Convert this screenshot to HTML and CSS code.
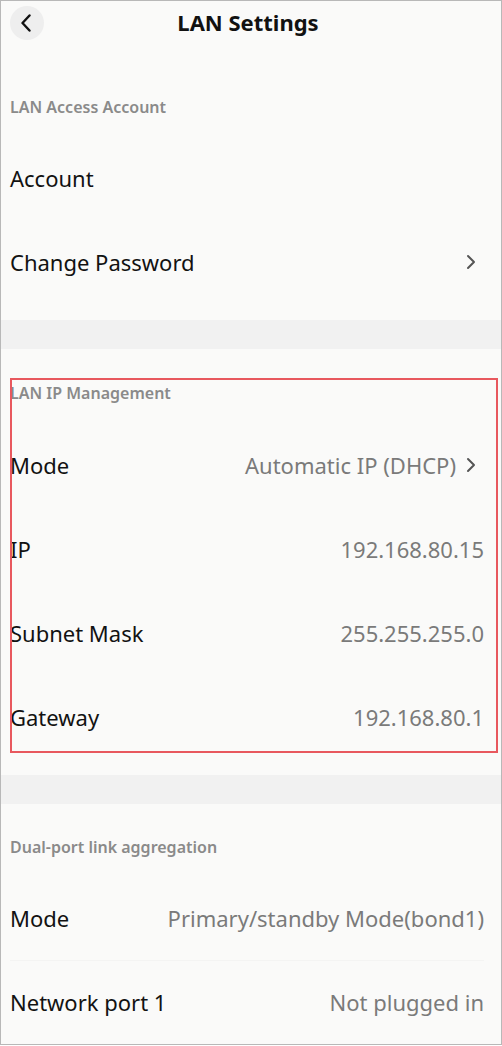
FILE: index.html
```html
<!DOCTYPE html>
<html>
<head>
<meta charset="utf-8">
<link rel="stylesheet" href="styles.css">
</head>
<body>
<div class="frame">
  <header class="topbar">
    <div class="back">
      <svg width="12" height="18" viewBox="0 0 12 18"><path d="M9.5 1.5 L2.5 9 L9.5 16.5" fill="none" stroke="#111" stroke-width="2.4" stroke-linecap="round" stroke-linejoin="round"/></svg>
    </div>
    <h1 class="title">LAN Settings</h1>
  </header>

  <section class="section first">
    <div class="sec-head">LAN Access Account</div>
    <div class="row"><span class="label">Account</span></div>
    <div class="row"><span class="label">Change Password</span><span class="value"><svg class="chev" width="10" height="16" viewBox="0 0 10 16"><path d="M2 2 L8 8 L2 14" fill="none" stroke="#555" stroke-width="2" stroke-linecap="round" stroke-linejoin="round"/></svg></span></div>
  </section>
  <div class="band"></div>

  <section class="section highlight">
    <div class="sec-head">LAN IP Management</div>
    <div class="row"><span class="label">Mode</span><span class="value">Automatic IP (DHCP)<svg class="chev" width="10" height="16" viewBox="0 0 10 16"><path d="M2 2 L8 8 L2 14" fill="none" stroke="#555" stroke-width="2" stroke-linecap="round" stroke-linejoin="round"/></svg></span></div>
    <div class="row"><span class="label">IP</span><span class="value">192.168.80.15</span></div>
    <div class="row"><span class="label">Subnet Mask</span><span class="value">255.255.255.0</span></div>
    <div class="row"><span class="label">Gateway</span><span class="value">192.168.80.1</span></div>
  </section>
  <div class="band"></div>

  <section class="section last">
    <div class="sec-head">Dual-port link aggregation</div>
    <div class="row sep"><span class="label">Mode</span><span class="value">Primary/standby Mode(bond1)</span></div>
    <div class="row"><span class="label">Network port 1</span><span class="value">Not plugged in</span></div>
  </section>
</div>
</body>
</html>
```

FILE: styles.css
```css
* { box-sizing: border-box; }
html, body { margin: 0; padding: 0; }
body {
  width: 502px;
  height: 1046px;
  overflow: hidden;
  background: #fff;
  font-family: "Noto Sans", "Open Sans", sans-serif;
}
.frame {
  width: 502px;
  height: 1045px;
  border: 1px solid #b8b8b8;
  background: #fafaf9;
  overflow: hidden;
}
.topbar {
  height: 42px;
  display: flex;
  align-items: center;
  justify-content: center;
  position: relative;
}
.back {
  position: absolute;
  left: 9px;
  top: 5px;
  width: 34px;
  height: 34px;
  border-radius: 50%;
  background: #eeeeee;
  display: flex;
  align-items: center;
  justify-content: center;
  padding-right: 2px;
}
.title {
  margin: 0;
  font-size: 22px;
  font-weight: 700;
  color: #111;
  margin-left: -6px;
}
.section {
  padding: 0 17px 15px 9px;
}
.sec-head {
  height: 75px;
  display: flex;
  align-items: center;
  padding-top: 12px;
  font-size: 16px;
  font-weight: 600;
  color: #8a8a8a;
}
.section.first .sec-head {
  height: 94px;
  padding-top: 33px;
}
.section.last .sec-head {
  height: 73px;
  padding-top: 12px;
}
.row {
  height: 84px;
  padding-bottom: 2px;
  display: flex;
  align-items: center;
  justify-content: space-between;
}
.row.sep { border-bottom: 1px solid #f4f4f3; }
.label {
  font-size: 22px;
  color: #121212;
}
.value {
  font-size: 22px;
  color: #7a7a7a;
  display: flex;
  align-items: center;
}
.chev { margin-left: 10px; margin-right: 8px; }
.band {
  height: 29px;
  background: #f1f1f1;
}
.highlight {
  position: relative;
}
.highlight::after {
  content: "";
  position: absolute;
  left: 9px;
  right: 3px;
  top: 29px;
  bottom: 22px;
  border: 2px solid #e8585e;
  pointer-events: none;
}
```
